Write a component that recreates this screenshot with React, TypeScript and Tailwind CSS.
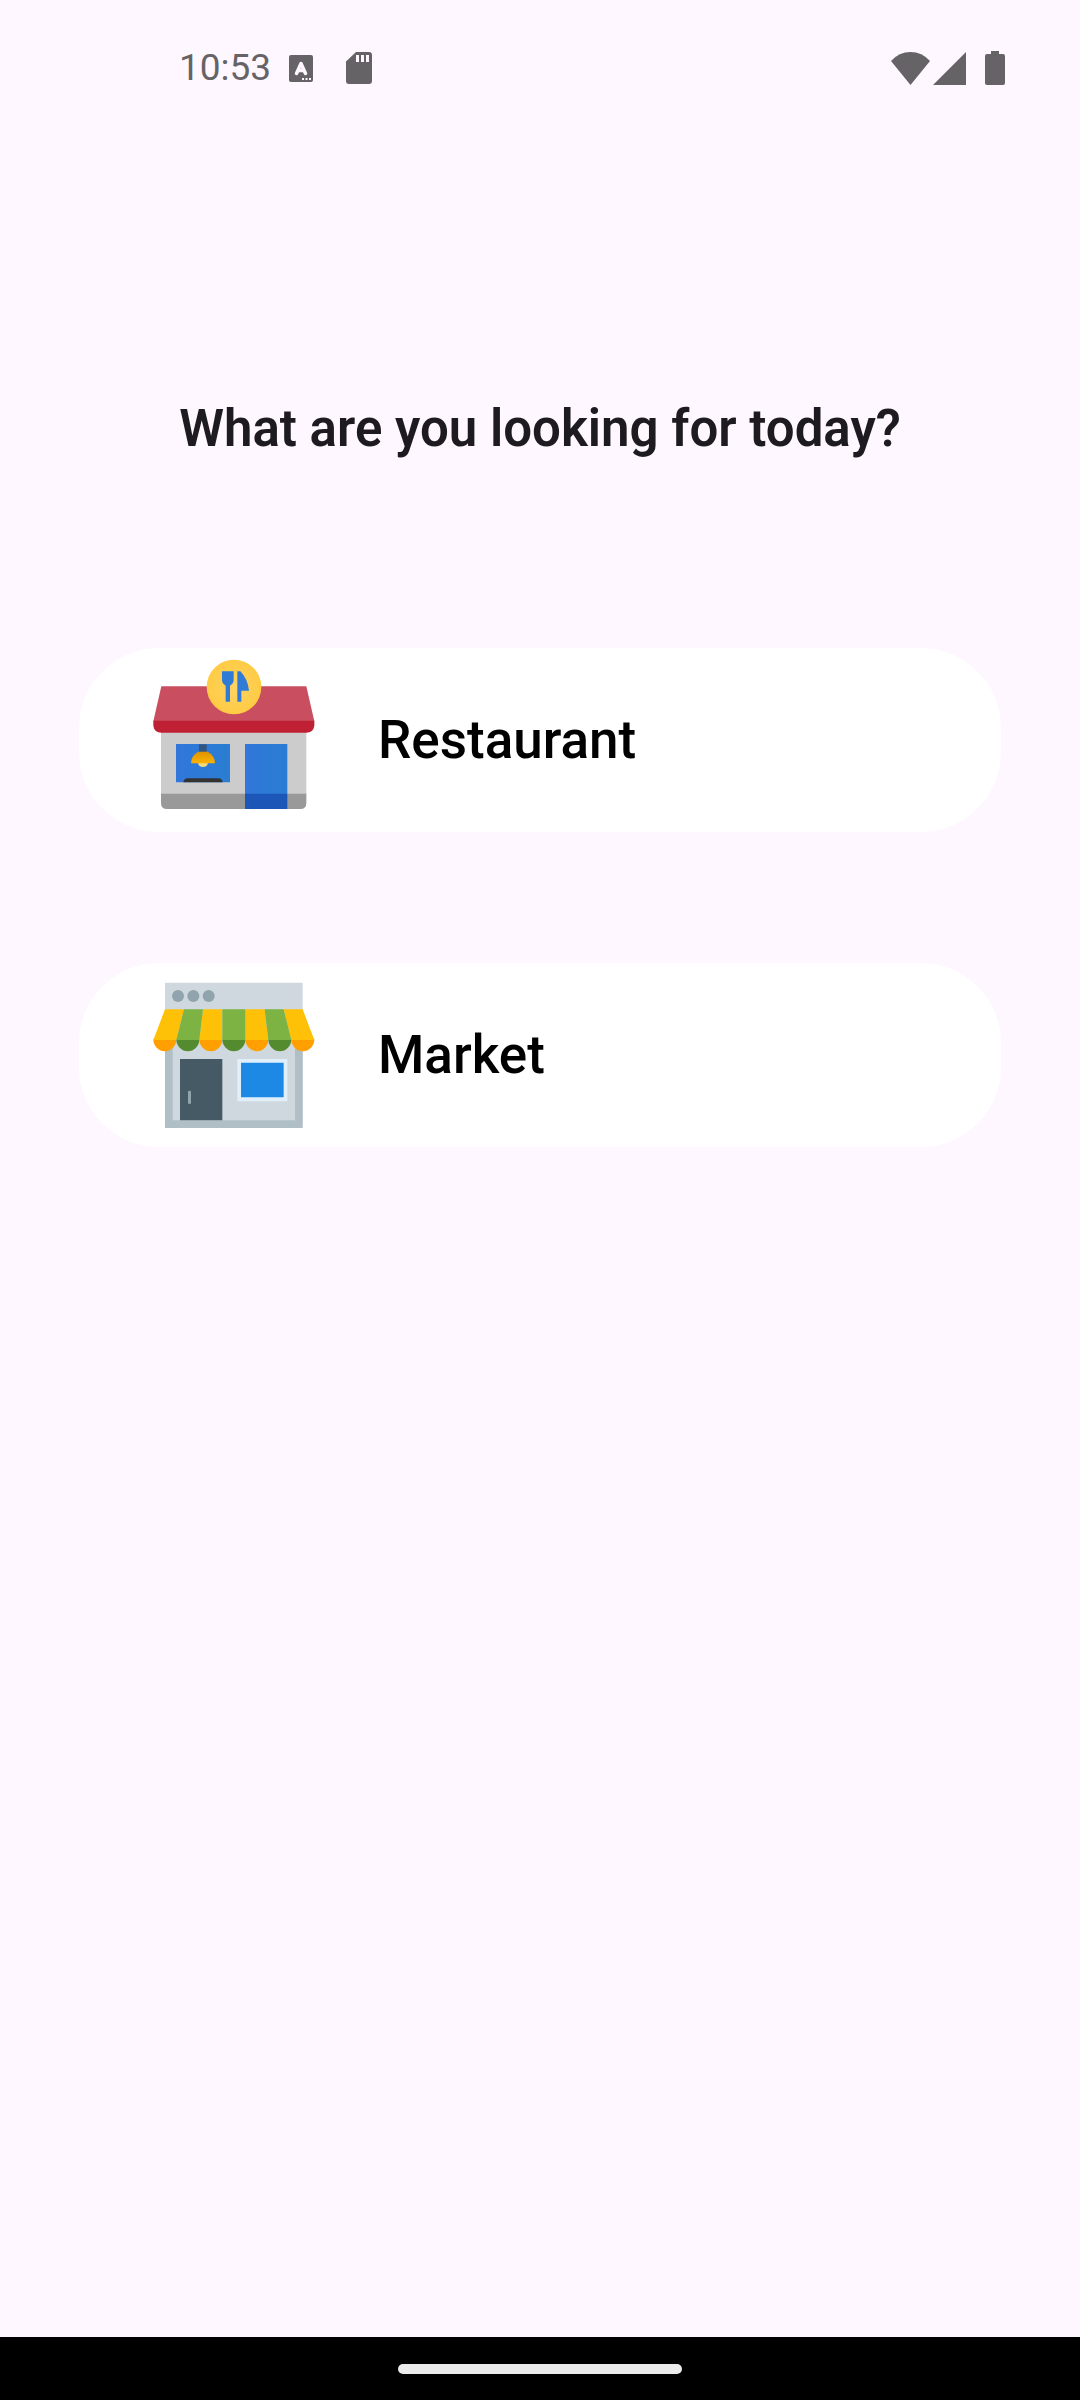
import type { ReactNode } from "react";

function RestaurantIcon() {
  return (
    <svg viewBox="246 54 552 552" className="size-[184px] shrink-0" aria-hidden="true">
      <defs>
        <radialGradient id="sign">
          <stop offset="0" stopColor="#ffd365" />
          <stop offset="1" stopColor="#fecb43" />
        </radialGradient>
        <linearGradient id="glass">
          <stop offset="0" stopColor="#3177da" />
          <stop offset="1" stopColor="#2a7dd2" />
        </linearGradient>
        <linearGradient id="lamp" x2="0" y2="1">
          <stop offset="0" stopColor="#de9300" />
          <stop offset="1" stopColor="#fbb300" />
        </linearGradient>
      </defs>
      <path d="M303 300H739V495H303Z" fill="#ccc" />
      <path d="M303 491H739V519Q739 537 721 537H321Q303 537 303 519Z" fill="#999" />
      <path d="M304 169H739L763 274H280Z" fill="#c94f60" />
      <path d="M280 272H763V287Q760 308 739 308H304Q283 308 280 287Z" fill="#bf2033" />
      <path d="M348 342H510V457H348Z" fill="url(#glass)" />
      <path d="M555 342H682V492H555Z" fill="url(#glass)" />
      <path d="M555 491H682V537H555Z" fill="#1c57b8" />
      <path d="M417 343H440V368H417Z" fill="#34557f" />
      <path d="M414 398H444Q442 411 429 411Q416 411 414 398Z" fill="#f5d77c" />
      <path d="M393 400Q394 376 415 365H443Q464 376 465 400Z" fill="url(#lamp)" />
      <path d="M370 457Q372 445 383 445H475Q486 445 488 457Z" fill="#333" />
      <circle cx="522" cy="171" r="82" fill="url(#sign)" />
      <path
        d="M486 124H521V151Q520 162 510 167V215H497V167Q487 162 486 151ZM532 124H541Q563 146 567 182H544V215H532Z"
        fill="#2f7bd6"
      />
    </svg>
  );
}

function MarketIcon() {
  return (
    <svg viewBox="246 39 552 552" className="size-[184px] shrink-0" aria-hidden="true">
      <path d="M315 98H728V520H315Z" fill="#cfd8de" />
      <path d="M315 280H338V511H705V280H728V534H315Z" fill="#b0bec6" />
      <g fill="#90a4ae">
        <circle cx="354" cy="138" r="18" />
        <circle cx="400" cy="138" r="18" />
        <circle cx="446" cy="138" r="18" />
      </g>
      <path d="M360 327H487V511H360Z" fill="#455a64" />
      <rect x="384" y="422" width="9" height="40" rx="4" fill="#90a4ae" />
      <path d="M532 327H682V454H532Z" fill="#e1effb" />
      <path d="M543 338H671V442H543Z" fill="#1e88e5" />
      <g fill="#ffa000">
        <path d="M280 268H349A34.5 36 0 0 1 280 268Z" />
        <path d="M418 268H487A34.5 36 0 0 1 418 268Z" />
        <path d="M556 268H625A34.5 36 0 0 1 556 268Z" />
        <path d="M694 268H763A34.5 36 0 0 1 694 268Z" />
      </g>
      <g fill="#558b2f">
        <path d="M349 268H418A34.5 36 0 0 1 349 268Z" />
        <path d="M487 268H556A34.5 36 0 0 1 487 268Z" />
        <path d="M625 268H694A34.5 36 0 0 1 625 268Z" />
      </g>
      <path
        d="M315 178H372L349 270H280ZM429 178H487V270H418ZM556 178H614L625 270H556ZM671 178H728L763 270H694Z"
        fill="#ffc107"
      />
      <path d="M372 178H429L418 270H349ZM487 178H556V270H487ZM614 178H671L694 270H625Z" fill="#7cb342" />
    </svg>
  );
}

function StatusBar() {
  return (
    <header className="flex h-[136px] items-center justify-between pr-[75px] pl-[179px] text-[#666367]">
      <div className="flex items-center">
        <span className="text-[37px] leading-[44px]">10:53</span>
        <svg viewBox="0 0 24 27" className="ml-[18px] h-[27px] w-6" fill="currentColor" aria-hidden="true">
          <rect width="24" height="27" rx="2" />
          <path d="M7.500 18.500L12 8.500L16.500 18.500M9 15.500H15" fill="none" stroke="#fef7ff" strokeWidth="3.500" strokeLinecap="round" strokeLinejoin="round" />
          <path d="M13 23h2v2h-2zM16.500 23h2v2h-2zM20 23h2v2h-2z" fill="#fef7ff" />
        </svg>
        <svg viewBox="0 0 26 32" className="ml-[33px] h-8 w-[26px]" fill="currentColor" aria-hidden="true">
          <path
            fillRule="evenodd"
            d="M10 0H23Q26 0 26 3V29Q26 32 23 32H3Q0 32 0 29V9.500ZM10 3V10H13V3ZM15 3V10H18V3ZM20 3V10H23V3Z"
          />
        </svg>
      </div>
      <div className="flex items-center">
        <svg viewBox="0 0 39 33" className="h-[33px] w-[39px]" fill="currentColor" aria-hidden="true">
          <path d="M0 9Q8 0 19.500 0T39 9L19.500 33Z" />
        </svg>
        <svg viewBox="0 0 33 33" className="ml-[3px] size-[33px]" fill="currentColor" aria-hidden="true">
          <path d="M33 0V33H0Z" />
        </svg>
        <svg viewBox="0 0 20 34" className="ml-[19px] h-[34px] w-5" fill="currentColor" aria-hidden="true">
          <path d="M6 0H14V3H18Q20 3 20 5V32Q20 34 18 34H2Q0 34 0 32V5Q0 3 2 3H6Z" />
        </svg>
      </div>
    </header>
  );
}

function CategoryButton({ icon, label }: { icon: ReactNode; label: string }) {
  return (
    <button
      type="button"
      className="flex w-full cursor-pointer items-center gap-[52px] rounded-[80px] bg-white pl-[63px] text-left text-[53px] leading-[60px] font-medium text-black"
    >
      {icon}
      <span>{label}</span>
    </button>
  );
}

export default function App() {
  return (
    <div className="flex min-h-screen flex-col bg-[#fef7ff] font-['Roboto',sans-serif]">
      <StatusBar />
      <main className="flex grow flex-col px-[79px] pt-[263px]">
        <h1 className="text-center text-[51px] leading-[60px] font-semibold text-[#1d1b20]">
          What are you looking for today?
        </h1>
        <div className="mt-[189px] flex flex-col gap-[131px]">
          <CategoryButton icon={<RestaurantIcon />} label="Restaurant" />
          <CategoryButton icon={<MarketIcon />} label="Market" />
        </div>
      </main>
      <footer className="flex h-[63px] items-center justify-center bg-black">
        <div className="h-[10px] w-[284px] rounded-full bg-[#ebebeb]" />
      </footer>
    </div>
  );
}
